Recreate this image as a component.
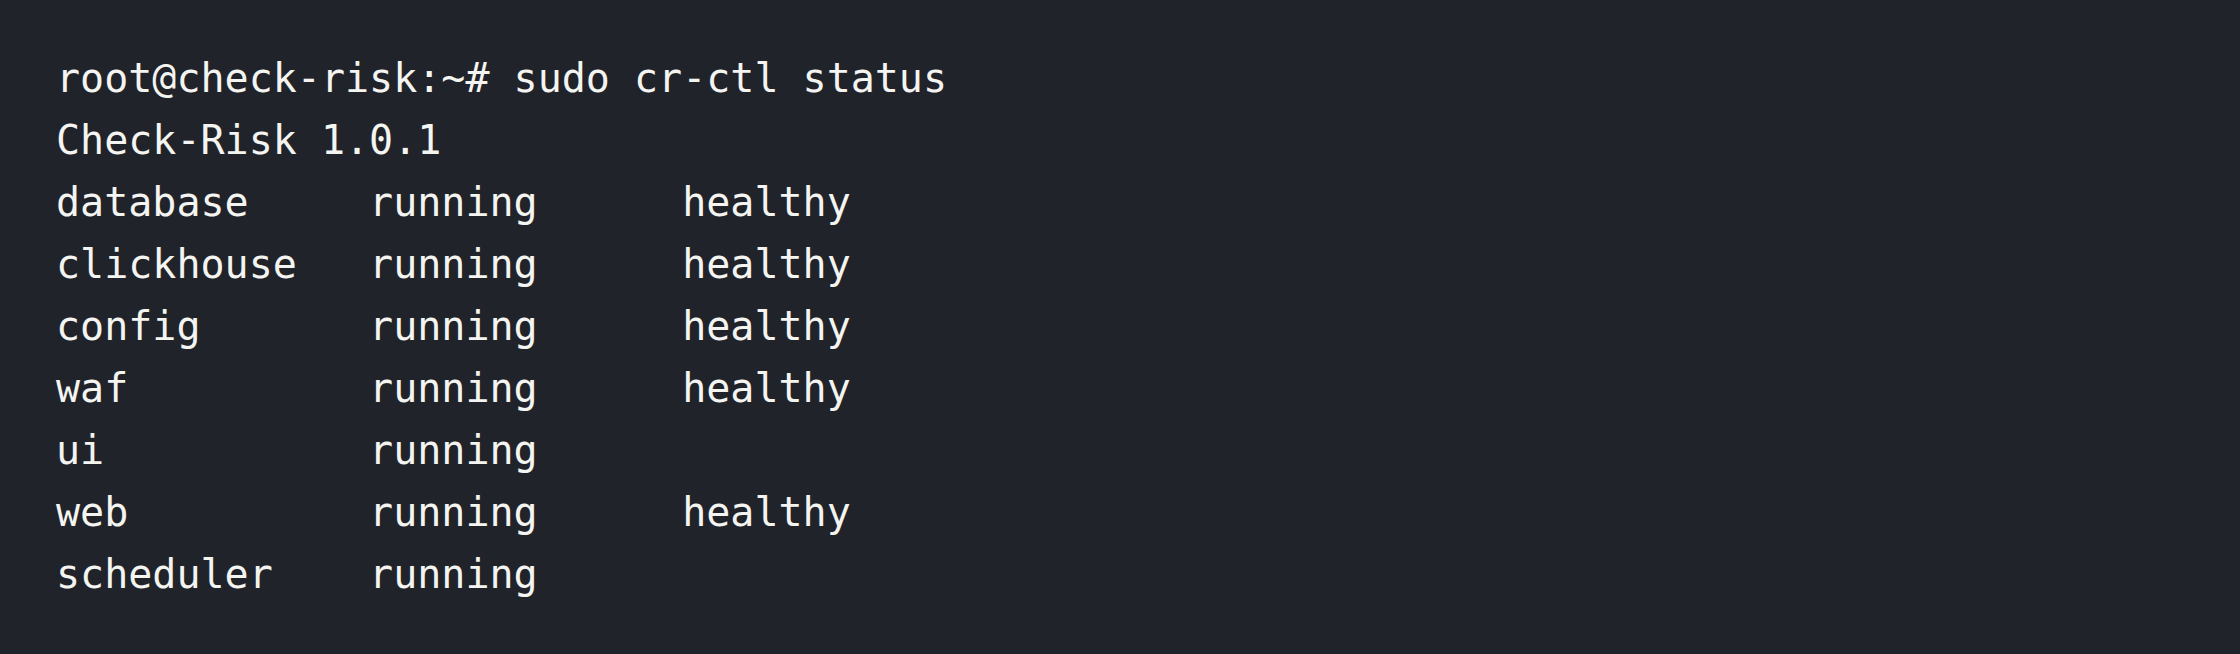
const lines = [
  "root@check-risk:~# sudo cr-ctl status",
  "Check-Risk 1.0.1",
  "database     running      healthy",
  "clickhouse   running      healthy",
  "config       running      healthy",
  "waf          running      healthy",
  "ui           running",
  "web          running      healthy",
  "scheduler    running",
];

const App = () => {
  return (
    <div className="w-[2240px] h-[654px] bg-[#21232b] overflow-hidden">
      <pre className="pl-[56px] pt-[47px] text-[40px] leading-[62px] text-[#f4f4f0] font-['DejaVu_Sans_Mono',monospace]">
        {lines.map((line) => (
          <div key={line}>{line}</div>
        ))}
      </pre>
    </div>
  );
};

export default App;
